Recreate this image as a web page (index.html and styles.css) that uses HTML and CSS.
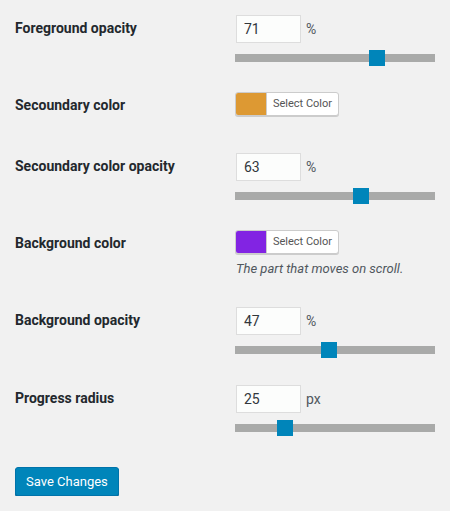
FILE: index.html
```html
<!DOCTYPE html>
<html>
<head>
<meta charset="utf-8">
<link rel="stylesheet" href="styles.css">
</head>
<body>
<div class="form">
  <div class="row">
    <div class="label">Foreground opacity</div>
    <div class="field">
      <div class="num"><span class="input">71</span><span class="unit">%</span></div>
      <div class="slider"><div class="track"></div><div class="thumb" style="left:134px"></div></div>
    </div>
  </div>
  <div class="row">
    <div class="label">Secoundary color</div>
    <div class="field">
      <div class="color"><span class="swatch" style="background:#dd9933"></span><span class="ctext">Select Color</span></div>
    </div>
  </div>
  <div class="row">
    <div class="label">Secoundary color opacity</div>
    <div class="field">
      <div class="num"><span class="input">63</span><span class="unit">%</span></div>
      <div class="slider"><div class="track"></div><div class="thumb" style="left:118px"></div></div>
    </div>
  </div>
  <div class="row">
    <div class="label">Background color</div>
    <div class="field field-desc">
      <div class="color"><span class="swatch" style="background:#8224e3"></span><span class="ctext">Select Color</span></div>
      <p class="desc">The part that moves on scroll.</p>
    </div>
  </div>
  <div class="row">
    <div class="label">Background opacity</div>
    <div class="field field-tall">
      <div class="num"><span class="input">47</span><span class="unit">%</span></div>
      <div class="slider"><div class="track"></div><div class="thumb" style="left:86px"></div></div>
    </div>
  </div>
  <div class="row">
    <div class="label">Progress radius</div>
    <div class="field">
      <div class="num"><span class="input">25</span><span class="unit">px</span></div>
      <div class="slider"><div class="track"></div><div class="thumb" style="left:42px"></div></div>
    </div>
  </div>
  <div class="actions"><button class="save">Save Changes</button></div>
</div>
</body>
</html>
```
FILE: styles.css
```css
html, body {
  margin: 0;
  padding: 0;
  background: #f1f1f1;
  font-family: Roboto, "Liberation Sans", sans-serif;
  color: #23282d;
}
.form {
  padding: 0 15px;
}
.row {
  display: flex;
}
.label {
  width: 220px;
  flex: none;
  padding: 17px 0 21px;
  font-size: 14px;
  font-weight: bold;
  line-height: 23px;
}
.field {
  padding: 15px 0 11px;
}
.field-desc {
  padding-bottom: 13px;
}
.field-tall {
  padding-bottom: 12px;
}
.num {
  display: flex;
  align-items: flex-start;
  margin-left: 1px;
}
.input {
  box-sizing: border-box;
  width: 65px;
  height: 28px;
  border: 1px solid #dddddd;
  background: #fcfdfc;
  font-size: 14px;
  line-height: 26px;
  padding-left: 7px;
  color: #32373c;
}
.unit {
  margin-left: 5px;
  font-size: 14px;
  line-height: 28px;
  color: #50575e;
}
.slider {
  position: relative;
  width: 200px;
  height: 16px;
  margin-top: 7px;
}
.track {
  position: absolute;
  left: 0;
  right: 0;
  top: 4px;
  height: 8px;
  background: #a9aaa9;
}
.thumb {
  position: absolute;
  top: 0;
  width: 16px;
  height: 16px;
  background: #0085ba;
}
.color {
  display: flex;
  box-sizing: border-box;
  width: 104px;
  height: 24px;
  border: 1px solid #cccccc;
  border-radius: 3px;
  overflow: hidden;
  background: #ffffff;
  box-shadow: 0 1px 0 #cccccc;
}
.swatch {
  width: 30px;
  flex: none;
  border-right: 1px solid #cccccc;
}
.ctext {
  flex: 1;
  font-size: 11px;
  line-height: 22px;
  text-align: center;
  color: #555555;
}
.desc {
  margin: 5px 0 0 1px;
  font-size: 13px;
  font-style: italic;
  line-height: 20px;
  color: #50575e;
}
.actions {
  padding-top: 20px;
}
.save {
  height: 29px;
  padding: 0 10px;
  background: #0085ba;
  border: 1px solid #0073aa;
  border-radius: 3px;
  box-shadow: 0 1px 0 #006799;
  color: #ffffff;
  font-family: Roboto, "Liberation Sans", sans-serif;
  font-size: 13px;
  line-height: 27px;
}
```
